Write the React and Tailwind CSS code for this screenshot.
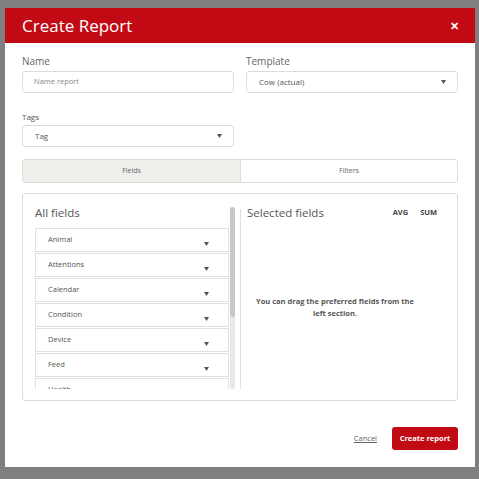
import React from "react";

const fields = ["Animal", "Attentions", "Calendar", "Condition", "Device", "Feed", "Health"];

const Caret = ({ className = "" }) => (
  <svg width="5" height="4" viewBox="0 0 5 4" className={className}>
    <path d="M0 0 L5 0 L2.5 4 Z" fill="#555" />
  </svg>
);

const SelectBox = ({ value }) => (
  <div className="flex h-[22px] items-center justify-between rounded-[3px] border border-[#dcdcd8] bg-white pl-[12px] pr-[11px] text-[8px] text-[#555]">
    <span>{value}</span>
    <Caret />
  </div>
);

export default function App() {
  return (
    <div
      className="h-[479px] w-[479px] bg-[#7f7f7f] pt-[8px] pl-[5px]"
      style={{ fontFamily: '"Open Sans", "Noto Sans", sans-serif' }}
    >
      <div className="flex h-[459px] w-[470px] flex-col bg-white">
        {/* Header */}
        <div className="flex h-[35px] items-center justify-between bg-[#c20a14] pl-[17px] pr-[16px]">
          <span className="text-[17px] leading-none text-white">Create Report</span>
          <span className="text-[11px] font-bold leading-none text-white">✕</span>
        </div>

        <div className="flex flex-1 flex-col px-[17px]">
          {/* Name / Template */}
          <div className="mt-[12px] grid grid-cols-2 gap-[12px]">
            <div>
              <div className="mb-[4px] text-[10px] leading-[12px] text-[#666]">Name</div>
              <div className="flex h-[22px] items-center rounded-[3px] border border-[#dcdcd8] pl-[11px] text-[7.5px] text-[#888]">
                Name report
              </div>
            </div>
            <div>
              <div className="mb-[4px] text-[10px] leading-[12px] text-[#666]">Template</div>
              <SelectBox value="Cow (actual)" />
            </div>
          </div>

          {/* Tags */}
          <div className="mt-[18px] w-[212px]">
            <div className="mb-[3px] text-[8px] leading-[11px] text-[#555]">Tags</div>
            <SelectBox value="Tag" />
          </div>

          {/* Tabs */}
          <div className="mt-[12px] grid h-[24px] grid-cols-2 overflow-hidden rounded-[3px] border border-[#dcdcd8] text-[7px] text-[#666]">
            <div className="flex items-center justify-center bg-[#eeeeeb]">Fields</div>
            <div className="flex items-center justify-center border-l border-[#dcdcd8] bg-white">Filters</div>
          </div>

          {/* Panel */}
          <div className="mt-[10px] flex h-[208px] rounded-[3px] border border-[#dcdcd8] pt-[12px]">
            <div className="flex w-[212px] pl-[12px]">
              <div className="flex-1">
                <div className="mb-[8px] text-[11.5px] leading-[14px] text-[#555]">All fields</div>
                <div className="h-[161px] overflow-hidden">
                  {fields.map((f) => (
                    <div
                      key={f}
                      className="relative mb-[1px] h-[24px] border border-[#e0e0dc] bg-white pl-[12px] pt-[5px] text-[7.5px] text-[#555]"
                    >
                      {f}
                      <Caret className="absolute right-[19px] top-[13px]" />
                    </div>
                  ))}
                </div>
              </div>
              <div className="ml-[1px] mt-[1px] h-[182px] w-[5px] rounded-full bg-[#e8e8e6]">
                <div className="h-[110px] w-[5px] rounded-full bg-[#c8c8c6]" />
              </div>
            </div>
            <div className="mx-[5px] mt-[3px] h-[180px] w-px bg-[#e0e0dc]" />
            <div className="flex flex-1 flex-col pl-[1px] pr-[20px]">
              <div className="flex items-center justify-between">
                <span className="text-[11.5px] leading-[14px] text-[#555]">Selected fields</span>
                <div className="flex gap-[12px] text-[7.5px] font-bold text-[#444]">
                  <span>AVG</span>
                  <span>SUM</span>
                </div>
              </div>
              <div className="mt-[75px] pr-[14px] text-center text-[7.5px] font-bold leading-[12px] text-[#555]">
                You can drag the preferred fields from the
                <br />
                left section.
              </div>
            </div>
          </div>

          {/* Footer */}
          <div className="mt-[26px] flex items-center justify-end gap-[15px]">
            <span className="text-[7.5px] text-[#666] underline">Cancel</span>
            <button className="flex h-[23px] w-[66px] items-center justify-center rounded-[3px] bg-[#c20a14] text-[7.5px] font-bold text-white">
              Create report
            </button>
          </div>
        </div>
      </div>
    </div>
  );
}
